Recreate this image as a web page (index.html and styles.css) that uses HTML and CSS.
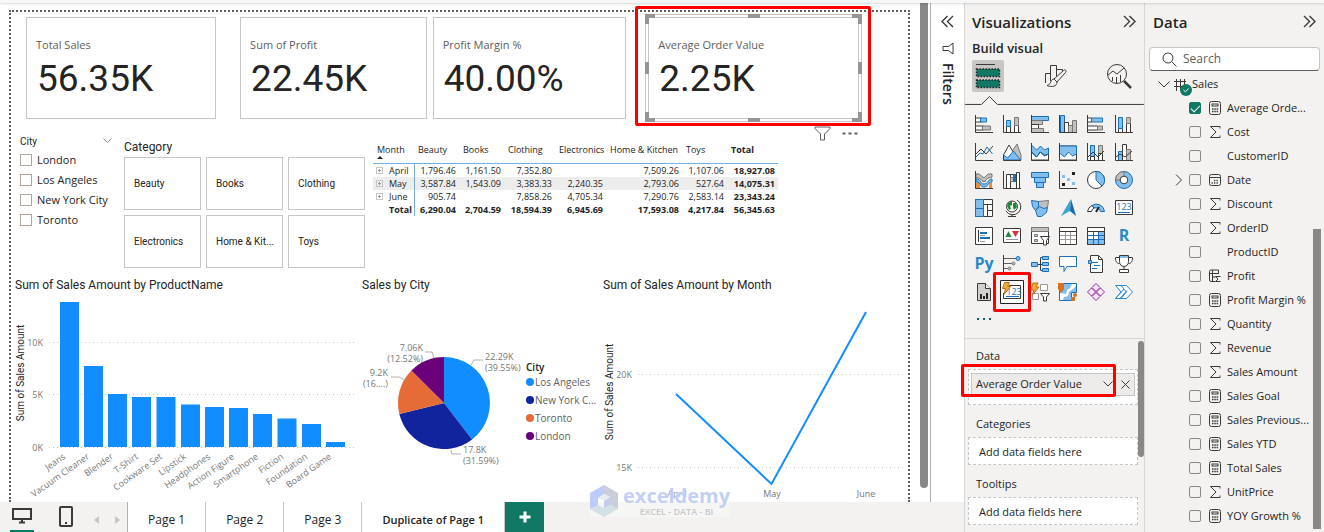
FILE: index.html
```html
<!DOCTYPE html>
<html lang="en">
<head>
    <meta charset="UTF-8">
    <meta name="viewport" content="width=device-width, initial-scale=1.0">
    <title>Sales Report</title>
    <link rel="stylesheet" href="styles.css">
</head>
<body>
    <!-- shared icons -->
    <svg class="defs" aria-hidden="true">
        <symbol id="calc" viewBox="0 0 12 14">
            <rect x="0.5" y="0.5" width="11" height="13" rx="2"/>
            <rect x="3" y="3" width="6" height="2"/>
            <path d="M3 8h1.5M5.3 8h1.5M7.6 8h1.5M3 10.5h1.5M5.3 10.5h1.5M7.6 10.5h1.5" stroke-width="1.5"/>
        </symbol>
        <symbol id="sigma" viewBox="0 0 12 14">
            <path d="M11 3.5V1.5H1.5L7 7l-5.500 5.500H11v-2"/>
        </symbol>
        <symbol id="calendar" viewBox="0 0 12 14">
            <rect x="0.5" y="1.500" width="11" height="11" rx="2"/>
            <path d="M0.500 4.500h11"/>
            <path d="M5 7.500h1.300M7.500 7.500h1.300M2.500 10h1.300M5 10h1.300M7.500 10h1.300" stroke-width="1.300"/>
        </symbol>
        <symbol id="calc-column" viewBox="0 0 12 14">
            <path d="M6 12.500H2a1.500 1.500 0 0 1-1.500-1.500V2.500A1.500 1.500 0 0 1 2 1h7.500v4M3.500 1v11.500M0.500 4.500h9M3.500 8h3"/>
            <path d="M11.500 7.500H6.500L9 10l-2.500 2.500h5"/>
        </symbol>
        <symbol id="collapse" viewBox="0 0 13 13">
            <path d="M1 1l5.500 5.500L1 12M6.500 1L12 6.500 6.500 12" stroke-width="1.400"/>
        </symbol>
    </svg>

    <div class="ribbon-edge"></div>
    <div class="app">
        <div class="workspace">
            <div class="report-row">
                <main class="canvas">
                    <div class="page">
                        <section class="cards">
                            <div class="card card-sales">
                                <div class="card-label">Total Sales</div>
                                <div class="card-value">56.35K</div>
                            </div>
                            <div class="card card-profit">
                                <div class="card-label">Sum of Profit</div>
                                <div class="card-value">22.45K</div>
                            </div>
                            <div class="card card-margin">
                                <div class="card-label">Profit Margin %</div>
                                <div class="card-value">40.00%</div>
                            </div>
                            <div class="card card-order selected">
                                <div class="card-label">Average Order Value</div>
                                <div class="card-value">2.25K</div>
                                <div class="frame">
                                    <span class="handle corner top left"></span>
                                    <span class="handle edge-h top"></span>
                                    <span class="handle corner top right"></span>
                                    <span class="handle edge-v left"></span>
                                    <span class="handle edge-v right"></span>
                                    <span class="handle corner bottom left"></span>
                                    <span class="handle edge-h bottom"></span>
                                    <span class="handle corner bottom right"></span>
                                </div>
                                <div class="mark mark-card"></div>
                            </div>
                        </section>

                        <section class="middle">
                            <div class="slicer">
                                <div class="slicer-head">
                                    <span>City</span>
                                    <svg width="9" height="6" viewBox="0 0 9 6"><path d="M0.500 0.500l4 4 4-4"/></svg>
                                </div>
                                <label><input type="checkbox">London</label>
                                <label><input type="checkbox">Los Angeles</label>
                                <label><input type="checkbox">New York City</label>
                                <label><input type="checkbox">Toronto</label>
                            </div>
                            <div class="category">
                                <h2>Category</h2>
                                <div class="tiles">
                                    <button>Beauty</button>
                                    <button>Books</button>
                                    <button>Clothing</button>
                                    <button>Electronics</button>
                                    <button>Home &amp; Kit...</button>
                                    <button>Toys</button>
                                </div>
                            </div>
                            <table class="matrix">
                                <thead>
                                    <tr>
                                        <th class="month">Month<svg width="6" height="3" viewBox="0 0 6 3"><path d="M0 3l3-3 3 3z"/></svg></th>
                                        <th>Beauty</th><th>Books</th><th class="wide">Clothing</th><th class="wide">Electronics</th><th class="widest">Home &amp; Kitchen</th><th>Toys</th><th class="wide total">Total</th>
                                    </tr>
                                </thead>
                                <tbody>
                                    <tr><th><i></i>April</th><td>1,796.46</td><td>1,161.50</td><td>7,352.80</td><td></td><td>7,509.26</td><td>1,107.06</td><td class="total">18,927.08</td></tr>
                                    <tr class="striped"><th><i></i>May</th><td>3,587.84</td><td>1,543.09</td><td>3,383.33</td><td>2,240.35</td><td>2,793.06</td><td>527.64</td><td class="total">14,075.31</td></tr>
                                    <tr><th><i></i>June</th><td>905.74</td><td></td><td>7,858.26</td><td>4,705.34</td><td>7,290.76</td><td>2,583.14</td><td class="total">23,343.24</td></tr>
                                    <tr class="sum"><th>Total</th><td>6,290.04</td><td>2,704.59</td><td>18,594.39</td><td>6,945.69</td><td>17,593.08</td><td>4,217.84</td><td>56,345.63</td></tr>
                                </tbody>
                            </table>
                            <div class="visual-tools">
                                <button aria-label="Filters on this visual"><svg width="17" height="15" viewBox="0 0 17 15"><path d="M1 1h15v1.500L10.500 8v6h-4V8L1 2.500z"/></svg></button>
                                <button aria-label="More options"><svg width="16" height="15" viewBox="0 0 16 15"><path class="dots" d="M0.500 7.500h3M6.500 7.500h3M12.500 7.500h3"/></svg></button>
                            </div>
                        </section>

                        <section class="charts">
                            <div class="chart">
                                <h2>Sum of Sales Amount by ProductName</h2>
                                <svg viewBox="15 293 347 207">
                                    <path class="gridline" d="M49 342.500h306M49 394.500h306M49 447.500h306"/>
                                    <g class="bars">
                                        <rect x="60" y="302" width="19" height="145"/>
                                        <rect x="84" y="366" width="19" height="81"/>
                                        <rect x="108" y="394" width="19" height="53"/>
                                        <rect x="132" y="397" width="19" height="50"/>
                                        <rect x="156.500" y="397" width="19" height="50"/>
                                        <rect x="181" y="404.500" width="19" height="42.500"/>
                                        <rect x="205" y="407" width="19" height="40"/>
                                        <rect x="229" y="408" width="19" height="39"/>
                                        <rect x="253" y="414" width="19" height="33"/>
                                        <rect x="277.500" y="418.500" width="19" height="28.500"/>
                                        <rect x="302" y="424" width="19" height="23"/>
                                        <rect x="326" y="442" width="19" height="5"/>
                                    </g>
                                    <g class="axis end">
                                        <text x="43" y="346">10K</text>
                                        <text x="43" y="398">5K</text>
                                        <text x="43" y="451">0K</text>
                                        <text transform="translate(66 458) rotate(-35)">Jeans</text>
                                        <text transform="translate(90 458) rotate(-35)">Vacuum Cleaner</text>
                                        <text transform="translate(114 458) rotate(-35)">Blender</text>
                                        <text transform="translate(139 458) rotate(-35)">T-Shirt</text>
                                        <text transform="translate(163 458) rotate(-35)">Cookware Set</text>
                                        <text transform="translate(187 458) rotate(-35)">Lipstick</text>
                                        <text transform="translate(211 458) rotate(-35)">Headphones</text>
                                        <text transform="translate(235 458) rotate(-35)">Action Figure</text>
                                        <text transform="translate(259 458) rotate(-35)">Smartphone</text>
                                        <text transform="translate(284 458) rotate(-35)">Fiction</text>
                                        <text transform="translate(308 458) rotate(-35)">Foundation</text>
                                        <text transform="translate(332 458) rotate(-35)">Board Game</text>
                                    </g>
                                    <text class="axis-title" transform="translate(24 373) rotate(-90)">Sum of Sales Amount</text>
                                </svg>
                            </div>
                            <div class="chart">
                                <h2>Sales by City</h2>
                                <div class="pie-row">
                                    <svg viewBox="362 293 164 207">
                                        <g class="slices">
                                            <path fill="#118dff" d="M444 403V357A46 46 0 0 1 472.100 439.400z"/>
                                            <path fill="#12239e" d="M444 403L472.100 439.400A46 46 0 0 1 399.300 414z"/>
                                            <path fill="#e66c37" d="M444 403L399.300 414A46 46 0 0 1 411.400 370.500z"/>
                                            <path fill="#6b007b" d="M444 403L411.400 370.500A46 46 0 0 1 444 357z"/>
                                        </g>
                                        <path class="leader" d="M471 365l3-5h9M425 352h7l2 6M391 377h8l6 3M451 450l1 4h9"/>
                                        <g class="axis">
                                            <text x="485" y="360">22.29K</text>
                                            <text x="485" y="371">(39.55%)</text>
                                            <text x="463" y="453">17.8K</text>
                                            <text x="463" y="464">(31.59%)</text>
                                        </g>
                                        <g class="axis end">
                                            <text x="423" y="351">7.06K</text>
                                            <text x="423" y="362">(12.52%)</text>
                                            <text x="388" y="376">9.2K</text>
                                            <text x="388" y="387">(16....)</text>
                                        </g>
                                    </svg>
                                    <ul class="legend">
                                        <li class="legend-title">City</li>
                                        <li><i class="la"></i>Los Angeles</li>
                                        <li><i class="ny"></i>New York C...</li>
                                        <li><i class="to"></i>Toronto</li>
                                        <li><i class="lo"></i>London</li>
                                    </ul>
                                </div>
                            </div>
                            <div class="chart">
                                <h2>Sum of Sales Amount by Month</h2>
                                <svg viewBox="603 293 305 207">
                                    <path class="gridline" d="M638 374.500h265M638 467.500h265"/>
                                    <path class="line" d="M676 394l95.500 90L866 312"/>
                                    <g class="axis end">
                                        <text x="632" y="378">20K</text>
                                        <text x="632" y="471">15K</text>
                                    </g>
                                    <g class="axis mid">
                                        <text x="677" y="497">April</text>
                                        <text x="772" y="497">May</text>
                                        <text x="866" y="497">June</text>
                                    </g>
                                    <text class="axis-title" transform="translate(613 392) rotate(-90)">Sum of Sales Amount</text>
                                </svg>
                            </div>
                        </section>
                    </div>
                    <div class="canvas-scroll"></div>
                </main>

                <aside class="filters">
                    <button aria-label="Expand filters"><svg class="flip" width="13" height="13"><use href="#collapse"/></svg></button>
                    <svg class="funnel" width="12" height="13" viewBox="0 0 12 13"><path d="M11 1v11L6.500 8.500H1v-4h5.500z"/></svg>
                    <span>Filters</span>
                </aside>
            </div>

            <nav class="tabs">
                <div class="views">
                    <button class="view active" aria-label="Desktop layout"><svg width="20" height="16" viewBox="0 0 20 16"><path d="M1 1h18v10H1zM10 11v3M7 14.500h6"/></svg></button>
                    <button class="view" aria-label="Mobile layout"><svg width="14" height="21" viewBox="0 0 14 21"><rect x="1" y="1" width="12" height="19" rx="1"/><path d="M6 17h2"/></svg></button>
                    <div class="steps">
                        <button aria-label="Previous page"><svg width="5" height="8" viewBox="0 0 5 8"><path d="M5 0v8L0 4z"/></svg></button>
                        <button aria-label="Next page"><svg width="5" height="8" viewBox="0 0 5 8"><path d="M0 0v8l5-4z"/></svg></button>
                    </div>
                </div>
                <button class="tab">Page 1</button>
                <button class="tab">Page 2</button>
                <button class="tab">Page 3</button>
                <button class="tab current">Duplicate of Page 1</button>
                <button class="add" aria-label="New page"><svg width="12" height="12" viewBox="0 0 12 12"><path d="M6 0.500v11M0.500 6h11"/></svg></button>
                <div class="watermark">
                    <svg width="28" height="32" viewBox="0 0 28 32">
                        <path fill="#bccbf8" d="M14 0v9l-6 4v8L0 24V8z"/>
                        <path fill="#c9ced8" d="M14 0l14 8v16l-8-4v-8l-6-3z"/>
                        <path fill="#d3e0e6" d="M0 24l8-4 6 3 6-3 8 4-14 8z"/>
                        <path fill="#e8ebf2" d="M8 13l6-4 6 3-6 4z"/>
                        <path fill="#c2cdf0" d="M14 16l6-4v8l-6 3z"/>
                    </svg>
                    <div>
                        <strong>exceldemy</strong>
                        <small>EXCEL - DATA - BI</small>
                    </div>
                </div>
            </nav>
        </div>

        <aside class="viz">
            <header>
                <h1>Visualizations</h1>
                <button aria-label="Collapse"><svg width="13" height="13"><use href="#collapse"/></svg></button>
            </header>
            <h3>Build visual</h3>
            <div class="modes">
                <button class="mode on" aria-label="Build visual">
                    <svg width="32" height="32" viewBox="0 0 32 32">
                        <path class="k" d="M4 4.500h19"/>
                        <path d="M4.500 9h23v7.500h-23zM4.500 20h23v7.500h-23z" fill="#117865" stroke="#222" stroke-width="1.500" stroke-dasharray="1.500 1.500"/>
                    </svg>
                </button>
                <button class="mode" aria-label="Format visual">
                    <svg width="24" height="24" viewBox="0 0 24 24">
                        <path class="k" d="M2.500 19V9.500h5M7.500 17V1.500h6v11M13.500 5.500h6v2"/>
                        <path class="k" d="M11 15L20.500 6.500c1.500-1.500 3.500 0 2 2L14 18M11 15c-4 0-2 5-7 6.500 5 2 10 1 10-3.500zM11 15l3 3"/>
                    </svg>
                </button>
                <button class="mode" aria-label="Analytics">
                    <svg width="26" height="26" viewBox="0 0 26 26">
                        <circle class="k" cx="11" cy="11" r="9.500"/>
                        <path class="k" d="M2 12l5-4 4 3 7-6M6.500 18v-4M10.500 20v-6M14.500 19v-7"/>
                        <path d="M18 18l7 7" stroke="#3b3a39" stroke-width="2.500"/>
                    </svg>
                </button>
            </div>
            <svg class="notch" viewBox="0 0 180 9"><path class="k" d="M0 8.500h16.500l8-8 8 8H180"/></svg>

            <div class="gallery">
                <button aria-label="Stacked bar"><svg viewBox="0 0 18 18"><path class="w" d="M0.500 3h6v4h-6zM0.500 11h8v4h-8z"/><path class="b" d="M5.500 3h6v4h-6z"/><path class="g" d="M7.500 11h8v4h-8z"/><path class="k" d="M0.500 0v17.500H18"/></svg></button>
                <button aria-label="Stacked column"><svg viewBox="0 0 18 18"><path class="w" d="M3.500 11.500h4v6h-4zM11.500 10.500h4v7h-4z"/><path class="b" d="M3.500 5.500h4v6h-4z"/><path class="g" d="M11.500 2.500h4v8h-4z"/><path class="k" d="M0.500 0v17.500H18"/></svg></button>
                <button aria-label="Clustered bar"><svg viewBox="0 0 18 18"><path class="b" d="M0.500 1.500h17v4h-17z"/><path class="g" d="M0.500 5.500h11v4h-11z"/><path class="w" d="M0.500 9.500h7v4h-7z"/><path class="g" d="M0.500 13.500h12v4h-12z"/><path class="k" d="M0.500 0v17.500H18"/></svg></button>
                <button aria-label="Clustered column"><svg viewBox="0 0 18 18"><path class="b" d="M1.500 0.500h4v17h-4z"/><path class="w" d="M5.500 7.500h4v10h-4z"/><path class="g" d="M9.500 10.500h4v7h-4zM13.500 5.500h4v12h-4z"/><path class="k" d="M0.500 0v17.500H18"/></svg></button>
                <button aria-label="Full stacked bar"><svg viewBox="0 0 18 18"><path class="w" d="M0.500 3h4v4h-4zM0.500 11h10v4h-10z"/><path class="b" d="M4.500 3h11v4h-11z"/><path class="g" d="M10.500 11h5v4h-5z"/><path class="k" d="M0.500 0v17.500H18"/></svg></button>
                <button aria-label="Full stacked column"><svg viewBox="0 0 18 18"><path class="w" d="M3.500 13.500h4v4h-4zM11.500 8.500h4v9h-4z"/><path class="b" d="M3.500 2.500h4v11h-4z"/><path class="g" d="M11.500 2.500h4v6h-4z"/><path class="k" d="M0.500 0v17.500H18"/></svg></button>

                <button aria-label="Line"><svg viewBox="0 0 18 18"><path class="l" d="M1 14l4-4 3 1 4-7 5.500 7"/><path class="k" d="M1 11l5-5 5 5 7-8M0.500 0v17.500H18"/></svg></button>
                <button aria-label="Area"><svg viewBox="0 0 18 18"><path class="g" d="M8 10l6-9 4 11v5H10z"/><path class="w" d="M0.500 12L6 2l6 10-5 5H0.500z"/><path class="b" d="M0.500 17v-5l4 3 6-7 7 9z"/><path class="k" d="M0.500 12v5.500H18"/></svg></button>
                <button aria-label="Stacked area"><svg viewBox="0 0 18 18"><path class="b" d="M0.500 2l5 5 4-4 4 4 4-2v6l-4 1-4-3-4 5-5-5z"/><path class="w" d="M0.500 9l5 5 4-5 4 4 4-2v6h-17z"/><path class="l" d="M0.500 9l5 5 4-5 4 4 4-2"/><path class="k" d="M0.500 0v17.500H18"/></svg></button>
                <button aria-label="Full stacked area"><svg viewBox="0 0 18 18"><path class="w" d="M0.500 3h17v14h-17z"/><path class="b" d="M0.500 3h17v8l-4 2-4-4-4 5-5-4z"/><path class="k" d="M0.500 0v17.500H18"/></svg></button>
                <button aria-label="Line and stacked column"><svg viewBox="0 0 18 18"><path class="b" d="M3.500 2.500h4v11h-4z"/><path class="g" d="M11.500 2.500h4v8h-4z"/><path class="w" d="M3.500 13.500h4v4h-4zM11.500 10.500h4v7h-4z"/><path class="k" d="M1 14l5-5 5 5 6-6M0.500 0v17.500H18"/></svg></button>
                <button aria-label="Line and clustered column"><svg viewBox="0 0 18 18"><path class="b" d="M3.500 8.500h4v9h-4z"/><path class="w" d="M7.500 1.500h4v16h-4z"/><path class="g" d="M11.500 6.500h4v11h-4z"/><path class="k" d="M1 14l4-3 5 3 7-6M0.500 0v17.500H18"/></svg></button>

                <button aria-label="Ribbon"><svg viewBox="0 0 18 18"><path fill="#e8912d" stroke="none" d="M1 12h4v5H1zM14 12h3v5h-3zM7 8h4v3H7z"/><path class="g" d="M1 3h3l5 4 4-4h4v3l-4 1-4 4-5-4H1z"/><path class="b" d="M1 8c6 0 3 5 8 5s3-5 8-5v3c-5 0-3 5-8 5s-2-5-8-5z"/><path class="k" d="M0.500 0v17.500H18"/></svg></button>
                <button aria-label="Waterfall"><svg viewBox="0 0 18 18"><path class="w" d="M3.500 3.500h4v14h-4zM7.500 3.500h3v5h-3zM13.500 1.500h3v16h-3z"/><path class="g" d="M7.500 6.500h3v4h-3z"/><path fill="#1a6fba" stroke="none" d="M10 3h3v8h-3z"/><path class="k" d="M0.500 0v17.500H18"/></svg></button>
                <button aria-label="Funnel"><svg viewBox="0 0 18 18"><path class="b" d="M0.500 1.500h17v5h-17zM3.500 6.500h11v5h-11zM5.500 11.500h7v5h-7z"/></svg></button>
                <button aria-label="Scatter"><svg viewBox="0 0 18 18"><path fill="#83beec" stroke="none" d="M3 4h3v3H3zM8 7h3v3H8zM13 11h3v3h-3z"/><path fill="#222" stroke="none" d="M13 1h3v3h-3zM3 12h3v3H3z"/><path class="k" d="M0.500 0v17.500H18"/></svg></button>
                <button aria-label="Pie"><svg viewBox="0 0 18 18"><circle class="w" cx="9" cy="9" r="8.500"/><path class="b" d="M9 9V0.500a8.500 8.500 0 0 1 6 14.500z"/></svg></button>
                <button aria-label="Donut"><svg viewBox="0 0 18 18"><circle class="b" cx="9" cy="9" r="8.500"/><path class="g" d="M0.500 9A8.500 8.500 0 0 1 9 0.500V9z"/><circle class="w" cx="9" cy="9" r="3.800"/></svg></button>

                <button aria-label="Treemap"><svg viewBox="0 0 18 18"><path class="w" d="M0.500 0.500h17v17h-17z"/><path class="b" d="M0.500 0.500h8v17h-8z"/><path class="k" d="M8.500 5.500h9M12.500 5.500v6h5M12.500 11.500v6"/><path class="l" d="M0.500 9.500h8"/></svg></button>
                <button aria-label="Map"><svg viewBox="0 0 18 18"><circle class="w" cx="9" cy="7.500" r="5.500"/><path fill="#1f8a3b" stroke="none" d="M4 7l1-3 4-2v4l-2 1 1 3-2 1zM10 4l3 0 1 4-3 3-1-3z"/><path class="k" d="M14 1a8 8 0 1 1-11 11M9 15v2.500M5 17.500h8"/></svg></button>
                <button aria-label="Filled map"><svg viewBox="0 0 18 18"><path class="g" d="M7.500 2.500l10-1-1 7-4 2-5-2z"/><path class="b" d="M0.500 1.500l7 1v5l-3 4-3-4z"/><path class="b" d="M4.500 11.500l4-4 4 2 4-1-1 5-5 4h-4z"/></svg></button>
                <button aria-label="Azure map"><svg viewBox="0 0 18 18"><path fill="#35a6d6" stroke="none" d="M12 0L2 17l9-5z"/><path fill="#1668b0" stroke="none" d="M12 0l5 17-6-5z"/></svg></button>
                <button aria-label="Gauge"><svg viewBox="0 0 18 18"><path class="b" d="M5 6.500a8 8 0 0 1 12.500 6h-4A5 5 0 0 0 7 9z"/><path class="w" d="M0.500 12.500a8 8 0 0 1 4.500-6L7 9a5 5 0 0 0-2.500 3.500z"/><path d="M9 13l3-5" stroke="#222" stroke-width="2"/></svg></button>
                <button aria-label="Card"><svg viewBox="0 0 18 18"><path class="w" d="M0.500 1.500h17v14h-17z"/><text x="9" y="11" class="num">123</text><path class="l" d="M3 13.500h12"/></svg></button>

                <button aria-label="Multi-row card"><svg viewBox="0 0 18 18"><path class="w" d="M0.500 0.500h17v17h-17z"/><path class="k" d="M3.500 3v12"/><path d="M5 6h7M5 11h10" stroke="#1a6fba" stroke-width="2"/><path d="M5 8.500h5M5 14.500h5" stroke="#999"/></svg></button>
                <button aria-label="KPI"><svg viewBox="0 0 18 18"><path class="w" d="M0.500 1.500h17v14h-17z"/><path fill="#1f8a3b" stroke="none" d="M2.500 10L5.500 4l3 6z"/><path fill="#d13438" stroke="none" d="M9 4h7l-3.500 6z"/><path d="M3 12.500h12" stroke="#999"/></svg></button>
                <button aria-label="Slicer"><svg viewBox="0 0 18 18"><path class="w" d="M0.500 0.500h17v16h-17z"/><path class="g" d="M0.500 0.500h17v4h-17zM3.500 7.500h3v2h-3zM3.500 12.500h3v2h-3z"/><path class="w" d="M9.500 9.500h9l-3 4v4.500h-3v-4.500z"/></svg></button>
                <button aria-label="Table"><svg viewBox="0 0 18 18"><path class="w" d="M0.500 0.500h17v17h-17z"/><path d="M1 8.500h16M1 12.500h16M6.500 5v12M11.500 5v12" stroke="#999"/><path class="k" d="M0.500 4.500h17"/></svg></button>
                <button aria-label="Matrix"><svg viewBox="0 0 18 18"><path class="w" d="M0.500 0.500h17v17h-17z"/><path fill="#83beec" stroke="none" d="M12 4h5v13H1v-4h11z"/><path d="M1 8.500h16M1 12.500h16M6.500 5v12M11.500 5v12" stroke="#1a6fba"/><path class="k" d="M0.500 0.500h17v17h-17zM0.500 4.500h17"/></svg></button>
                <button aria-label="R visual"><svg viewBox="0 0 18 18"><text x="9" y="14" class="letter">R</text></svg></button>

                <button aria-label="Python visual"><svg viewBox="0 0 18 18"><text x="9" y="14" class="letter">Py</text></svg></button>
                <button aria-label="Key influencers"><svg viewBox="0 0 18 18"><path d="M1 3.500h13M1 8.500h8M1 13.500h5" stroke="#605e5c"/><circle class="b" cx="15" cy="3.500" r="2"/><circle class="g" cx="10.500" cy="8.500" r="1.500"/><circle class="g" cx="6.500" cy="13.500" r="1.500"/><path class="k" d="M0.500 0v18"/></svg></button>
                <button aria-label="Decomposition tree"><svg viewBox="0 0 18 18"><path class="k" d="M6 9.500h6M9.500 3v12M9.500 2.500h2M9.500 15.500h2"/><path class="b" d="M0.500 7.500h6v4h-6zM11.500 1.500h6v3h-6zM11.500 7.500h6v3h-6zM11.500 13.500h6v3h-6z"/></svg></button>
                <button aria-label="Q and A"><svg viewBox="0 0 18 18"><path d="M0.500 1.500h17v10H8l-3 5v-5H0.500z" fill="#fff" stroke="#1a6fba"/></svg></button>
                <button aria-label="Narrative"><svg viewBox="0 0 18 18"><path class="w" d="M3.500 0.500h8l4 4v13h-12z"/><path class="k" d="M11.500 0.500v4h4"/><path class="l" d="M5 7.500h6M7 10.500h6M5 13.500h5"/><path class="b" d="M1.500 5.500h3v3h-3z"/></svg></button>
                <button aria-label="Goals"><svg viewBox="0 0 18 18"><path class="w" d="M4.500 2.500h-4c0 5 2 6 4 6M13.500 2.500h4c0 5-2 6-4 6M4.500 0.500h9v6c0 3-2 5-4.500 5s-4.500-2-4.500-5z"/><path class="k" d="M9 11.500v3"/><path fill="#83beec" stroke="none" d="M5 1h8v2H5z"/><path class="w" d="M4.500 14.500h9v3h-9z"/></svg></button>

                <button aria-label="Paginated report"><svg viewBox="0 0 18 18"><path fill="#d2d0ce" stroke="#3b3a39" d="M2.500 0.500h8l5 5v12h-13z"/><path class="w" d="M10.500 0.500v5h5"/><path fill="#222" stroke="none" d="M5 11h2v5H5zM8 13h2v3H8zM11 10h2v6h-2z"/></svg></button>
                <button class="picked" aria-label="Card (new)"><svg viewBox="0 0 24 24"><path d="M0.500 0.500h23v23H0.500z" fill="#fff" stroke="#222"/><path class="k" d="M9 5.500h11.500v13h-17V13"/><text x="14" y="15" class="num">123</text><path class="l" d="M6 16.500h13"/><path fill="#f2a93b" stroke="#c4700f" d="M4.500 2.500h5l-2 4h3l-6.500 8 1.500-6H2.500z"/></svg><span class="mark mark-icon"></span></button>
                <button aria-label="Slicer (new)"><svg viewBox="0 0 18 18"><path d="M9.500 1.500h7v6h-7zM1.500 10.500h6v6h-6z" fill="#fff" stroke="#999"/><path class="w" d="M9.500 10.500h9l-3 3.500v4h-3v-4z"/><path fill="#f2a93b" stroke="#c4700f" d="M2 0h5L5 4h3l-6.500 8L3 7H0z"/></svg></button>
                <button aria-label="ArcGIS map"><svg viewBox="0 0 18 18"><path class="b" d="M0.500 0.500h17v9h-5v8h-12z"/><path fill="#fff" stroke="none" d="M1 10v7h3l1-3 4-1 1-4 4-3 3-3V1h-4l-2 4-3 2-1 4z"/><path fill="#d9701c" stroke="none" d="M-1 0h6v6l-3 4-3-4zM12 14h4v4h-4z"/><circle cx="16" cy="12" r="2" fill="#d9701c" stroke="none"/></svg></button>
                <button aria-label="Power Apps"><svg viewBox="0 0 18 18"><path d="M9 0.500l4 4-4 4-4-4zM9 9.500l4 4-4 4-4-4zM4.500 5l4 4-4 4-4-4zM13.500 5l4 4-4 4-4-4z" fill="#f8e8f8" stroke="#93329e"/></svg></button>
                <button aria-label="Power Automate"><svg viewBox="0 0 18 18"><path d="M0.500 2.500h11l6 6.500-6 6.500h-11L6 9z" fill="#fff" stroke="#2b88d8"/><path d="M6 2.500L11.500 9 6 15.500M0.500 15.500L9 6M5 15.500l7-8" fill="none" stroke="#2b88d8"/></svg></button>
            </div>
            <button class="more-visuals" aria-label="Get more visuals"><svg width="16" height="4" viewBox="0 0 16 4"><path d="M1 1h2v2H1zM7 1h2v2H7zM13 1h2v2h-2z"/></svg></button>

            <div class="wells">
                <div class="wells-list">
                    <h4 class="first">Data</h4>
                    <div class="well filled">
                        <div class="pill">
                            <span>Average Order Value</span>
                            <button aria-label="Field options"><svg width="10" height="6" viewBox="0 0 10 6"><path d="M0.500 0.500L5 5l4.500-4.500"/></svg></button>
                            <button class="remove" aria-label="Remove field"><svg width="9" height="9" viewBox="0 0 9 9"><path d="M0.500 0.500l8 8M8.500 0.500l-8 8"/></svg></button>
                        </div>
                        <div class="mark mark-well"></div>
                    </div>
                    <h4>Categories</h4>
                    <div class="well">Add data fields here</div>
                    <h4>Tooltips</h4>
                    <div class="well">Add data fields here</div>
                </div>
                <div class="wells-scroll"></div>
            </div>
        </aside>

        <aside class="data">
            <header>
                <h1>Data</h1>
                <button aria-label="Collapse"><svg width="13" height="13"><use href="#collapse"/></svg></button>
            </header>
            <label class="search">
                <svg width="15" height="15" viewBox="0 0 15 15"><circle cx="6" cy="6" r="5"/><path d="M9.500 9.500l5 5"/></svg>
                <input type="text" placeholder="Search" aria-label="Search">
            </label>
            <div class="tree">
                <div class="fields">
                    <div class="table-row">
                        <svg width="12" height="7" viewBox="0 0 12 7"><path d="M0.500 0.500L6 6l5.500-5.500"/></svg>
                        <svg class="table-icon" width="19" height="18" viewBox="0 0 19 18">
                            <path d="M0 3.500h12M0 8.500h12M2.500 1v12M6.500 1v12M10.500 1v11"/>
                            <circle cx="12" cy="12" r="6"/>
                            <path class="tick" d="M9.500 12l2 1.800 3-3.300"/>
                        </svg>
                        <span>Sales</span>
                    </div>
                    <label class="field"><input type="checkbox" checked><svg><use href="#calc"/></svg>Average Orde...</label>
                    <label class="field"><input type="checkbox"><svg><use href="#sigma"/></svg>Cost</label>
                    <label class="field"><input type="checkbox"><svg></svg>CustomerID</label>
                    <label class="field expandable"><svg class="chevron" viewBox="0 0 12 14"><path d="M3 1.500L8.500 7 3 12.500"/></svg><input type="checkbox"><svg><use href="#calendar"/></svg>Date</label>
                    <label class="field"><input type="checkbox"><svg><use href="#sigma"/></svg>Discount</label>
                    <label class="field"><input type="checkbox"><svg><use href="#sigma"/></svg>OrderID</label>
                    <label class="field"><input type="checkbox"><svg></svg>ProductID</label>
                    <label class="field"><input type="checkbox"><svg><use href="#calc-column"/></svg>Profit</label>
                    <label class="field"><input type="checkbox"><svg><use href="#calc"/></svg>Profit Margin %</label>
                    <label class="field"><input type="checkbox"><svg><use href="#sigma"/></svg>Quantity</label>
                    <label class="field"><input type="checkbox"><svg><use href="#sigma"/></svg>Revenue</label>
                    <label class="field"><input type="checkbox"><svg><use href="#sigma"/></svg>Sales Amount</label>
                    <label class="field"><input type="checkbox"><svg><use href="#calc"/></svg>Sales Goal</label>
                    <label class="field"><input type="checkbox"><svg><use href="#calc"/></svg>Sales Previous...</label>
                    <label class="field"><input type="checkbox"><svg><use href="#calc"/></svg>Sales YTD</label>
                    <label class="field"><input type="checkbox"><svg><use href="#calc"/></svg>Total Sales</label>
                    <label class="field"><input type="checkbox"><svg><use href="#sigma"/></svg>UnitPrice</label>
                    <label class="field"><input type="checkbox"><svg><use href="#calc"/></svg>YOY Growth %</label>
                </div>
                <div class="tree-scroll"></div>
            </div>
        </aside>
    </div>
</body>
</html>
```

FILE: styles.css
```css
* {
    box-sizing: border-box;
}

body {
    margin: 0;
    height: 100vh;
    display: flex;
    flex-direction: column;
    overflow: hidden;
    font-family: "Open Sans", "Noto Sans", sans-serif;
    font-size: 11px;
    line-height: 16px;
    color: #252423;
    background-color: #f3f2f1;
}

h1, h2, h3, h4, ul {
    margin: 0;
    padding: 0;
    font-weight: 600;
}

button {
    margin: 0;
    padding: 0;
    border: 0;
    background: none;
    font: inherit;
    color: inherit;
    cursor: pointer;
}

svg {
    display: block;
    fill: none;
    stroke: #3b3a39;
}

svg text {
    stroke: none;
}

.defs {
    position: absolute;
    width: 0;
    height: 0;
}

.ribbon-edge {
    flex: none;
    height: 3px;
    background-color: #f7f7f7;
    box-shadow: 0 0 3px rgba(0, 0, 0, 0.3);
    z-index: 1;
}

.app {
    flex: 1;
    display: flex;
    min-height: 0;
}

.workspace {
    flex: 1;
    min-width: 0;
    display: flex;
    flex-direction: column;
}

.report-row {
    flex: 1;
    min-height: 0;
    display: flex;
    background-color: #fff;
}

/* report canvas */
.canvas {
    flex: 1;
    min-width: 0;
    display: flex;
    padding-left: 9px;
    padding-right: 2px;
    border-right: 1px solid #b3b0ad;
}

.page {
    flex: 1;
    min-width: 0;
    margin-top: 7px;
    margin-right: 10px;
    border: 2px dotted #605e5c;
    border-bottom: 0;
}

.canvas-scroll {
    width: 8px;
    margin-bottom: 14px;
    border-radius: 0 0 4px 4px;
    background-color: #8a8886;
}

.cards {
    display: flex;
    padding: 5px 49px 0 15px;
}

.card {
    position: relative;
    height: 102px;
    padding: 19px 9px;
    border: 1px solid #c8c6c4;
}

.card-sales {
    flex: 190;
}

.card-profit {
    flex: 186;
    margin-left: 24px;
}

.card-margin {
    flex: 194;
    margin-left: 6px;
}

.card-order {
    flex: 213;
    margin-left: 22px;
}

.card-label {
    color: #605e5c;
}

.card-value {
    padding-left: 1px;
    font-family: Roboto, sans-serif;
    font-size: 37px;
    line-height: 52px;
}

.frame {
    position: absolute;
    inset: -4px;
    border: 1px solid #c8c6c4;
}

.handle {
    position: absolute;
    border: 0 solid #979593;
}

.corner {
    width: 10px;
    height: 10px;
}

.edge-h {
    left: 50%;
    width: 12px;
    margin-left: -6px;
}

.edge-v {
    top: 50%;
    height: 12px;
    margin-top: -6px;
}

.top { top: -1px; border-top-width: 4px; }
.bottom { bottom: -1px; border-bottom-width: 4px; }
.left { left: -1px; border-left-width: 4px; }
.right { right: -1px; border-right-width: 4px; }

/* red highlight boxes */
.mark {
    position: absolute;
    border: 3px solid #f00;
    border-radius: 2px;
    pointer-events: none;
}

.mark-card {
    inset: -12px -13px -8px -14px;
}

.mark-icon {
    inset: -6px -5px;
}

.mark-well {
    inset: -6px 21px 7px -8px;
}

.middle {
    display: flex;
    align-items: flex-start;
    height: 158px;
    padding-left: 9px;
    padding-right: 50px;
}

.slicer {
    width: 92px;
    padding-top: 15px;
}

.slicer-head {
    display: flex;
    justify-content: space-between;
    font-family: Roboto, sans-serif;
    font-size: 10px;
}

.slicer-head svg {
    stroke: #8a8886;
    margin-top: 4px;
}

.slicer label {
    display: flex;
    align-items: center;
    height: 20px;
    white-space: nowrap;
}

input[type="checkbox"] {
    appearance: none;
    flex: none;
    width: 12px;
    height: 12px;
    margin: 0;
    border: 1px solid #8a8886;
    border-radius: 2px;
}

.slicer input[type="checkbox"] {
    margin-right: 5px;
    border-color: #b5a69c;
    border-radius: 0;
}

.category {
    width: 241px;
    margin-left: 12px;
    padding-top: 20px;
}

h2 {
    font-family: Roboto, sans-serif;
    font-size: 12px;
    font-weight: 400;
}

.tiles {
    display: grid;
    grid-template-columns: repeat(3, 1fr);
    grid-auto-rows: 53px;
    gap: 5px;
    margin-top: 2px;
}

.tiles button {
    padding-left: 9px;
    border: 1px solid #c8c6c4;
    font-family: Roboto, sans-serif;
    font-size: 10px;
    text-align: left;
}

.matrix {
    width: 405px;
    margin-left: 8px;
    margin-top: 24px;
    border-collapse: collapse;
    table-layout: fixed;
    font-size: 9px;
    line-height: 13px;
}

.matrix th, .matrix td {
    height: 13px;
    padding: 0 3px 0 4px;
    text-align: right;
    white-space: nowrap;
    font-weight: 400;
}

.matrix thead th {
    height: 20px;
    vertical-align: top;
    text-align: left;
    border-bottom: 1px solid #71afe2;
}

.matrix .month {
    width: 41px;
}

.matrix .month svg {
    fill: #252423;
    stroke: none;
}

.matrix .wide {
    width: 51px;
}

.matrix .widest {
    width: 76px;
}

.matrix tbody th {
    text-align: left;
    padding-left: 16px;
    padding-right: 0;
    border-right: 1px solid #71afe2;
}

.matrix i {
    float: left;
    width: 7px;
    height: 7px;
    margin-left: -13px;
    margin-top: 3px;
    border: 1px solid #c8c6c4;
    background: linear-gradient(#999, #999) 50% 50% / 3px 1px no-repeat, linear-gradient(#999, #999) 50% 50% / 1px 3px no-repeat;
}

.matrix .striped {
    background-color: #ededed;
}

.matrix td.total, .matrix th.total, .matrix .sum th, .matrix .sum td {
    font-weight: 700;
}

.visual-tools {
    display: flex;
    gap: 11px;
    margin-left: auto;
    padding-top: 7px;
}

.visual-tools svg {
    stroke: #605e5c;
}

.visual-tools .dots {
    stroke-width: 2;
}

.charts {
    display: grid;
    grid-template-columns: 347fr 241fr 305fr;
    padding-left: 4px;
}

.chart > svg {
    width: 100%;
}

.gridline {
    stroke: #c8c6c4;
    stroke-dasharray: 1 3;
}

.bars {
    fill: #118dff;
    stroke: none;
}

.slices {
    stroke: none;
}

.axis {
    fill: #777;
    font-size: 9px;
}

.end {
    text-anchor: end;
}

.mid {
    text-anchor: middle;
}

.axis-title {
    fill: #252423;
    font-family: Roboto, sans-serif;
    font-size: 10px;
    text-anchor: middle;
}

.leader {
    stroke: #b3b0ad;
}

.line {
    stroke: #118dff;
    stroke-width: 2;
}

.pie-row {
    display: flex;
}

.pie-row svg {
    flex: 164;
    min-width: 0;
    overflow: visible;
}

.legend {
    flex: 77;
    min-width: 0;
    padding-top: 68px;
    list-style: none;
    font-size: 10px;
    font-weight: 400;
    line-height: 18px;
    color: #605e5c;
    white-space: nowrap;
}

.legend li {
    display: flex;
    align-items: center;
}

.legend .legend-title {
    height: 12px;
    font-weight: 600;
    color: #252423;
}

.legend i {
    width: 8px;
    height: 8px;
    margin-right: 1px;
    border-radius: 50%;
}

.la { background-color: #118dff; }
.ny { background-color: #12239e; }
.to { background-color: #e66c37; }
.lo { background-color: #6b007b; }

/* filters strip */
.filters {
    flex: none;
    width: 33px;
    display: flex;
    flex-direction: column;
    align-items: center;
    gap: 8px;
    padding-top: 12px;
}

.filters .funnel {
    margin-top: 6px;
}

.filters .flip {
    transform: scaleX(-1);
}

.filters span {
    writing-mode: vertical-rl;
    font-size: 14px;
    font-weight: 600;
}

/* page tabs */
.tabs {
    position: relative;
    flex: none;
    height: 30px;
    display: flex;
}

.views {
    display: flex;
    gap: 20px;
    width: 128px;
    padding-left: 10px;
    border-right: 1px solid #b3b0ad;
}

.view {
    flex: none;
    display: flex;
    justify-content: center;
    align-items: center;
    width: 24px;
    border-bottom: 2px solid transparent;
}

.view svg {
    stroke-width: 2;
}

.active {
    border-color: #117865;
}

.steps {
    display: flex;
    gap: 16px;
    padding-top: 6px;
    margin-left: -4px;
}

.steps svg {
    fill: #c8c6c4;
    stroke: none;
}

.tab {
    padding: 6px 20px 0;
    border-right: 1px solid #c8c6c4;
    background-color: #fff;
    font-size: 12px;
}

.current {
    padding-left: 20px;
    padding-right: 20px;
    font-size: 11px;
    font-weight: 600;
}

.add {
    display: flex;
    justify-content: center;
    align-items: center;
    width: 39px;
    background-color: #117865;
}

.add svg {
    stroke: #fff;
    stroke-width: 3;
}

.watermark {
    position: absolute;
    left: 590px;
    bottom: 15px;
    display: flex;
    gap: 5px;
    background-color: rgba(255, 255, 255, 0.3);
    color: #c3cff5;
}

.watermark svg {
    stroke: none;
}

.watermark strong, .watermark small {
    display: block;
}

.watermark strong {
    font-size: 20px;
    line-height: 22px;
}

.watermark small {
    font-size: 9px;
    line-height: 9px;
    font-weight: 600;
    text-align: center;
    color: #c8c8cc;
}

/* side panes */
.viz, .data {
    flex: none;
    width: 180px;
    padding-top: 6px;
    border-left: 1px solid #d8d6d4;
}

header {
    display: flex;
    justify-content: space-between;
    align-items: center;
    height: 25px;
    padding: 0 8px 0 7px;
}

h1 {
    font-size: 15px;
}

.viz h3 {
    margin: 6px 7px 3px;
}

.modes {
    display: flex;
    justify-content: space-between;
    align-items: center;
    padding: 0 12px 0 7px;
    height: 34px;
}

.mode.on {
    border-radius: 2px;
    background-color: #c8c6c4;
}

.notch {
    width: 100%;
    margin-top: 3px;
}

.k { fill: none; stroke: #3b3a39; }
.w { fill: #fff; stroke: #3b3a39; }
.b { fill: #83beec; stroke: #1a6fba; }
.g { fill: #c0c0c0; stroke: #797775; }
.l { fill: none; stroke: #1a6fba; }

.num {
    fill: #1a6fba;
    font-size: 9px;
    text-anchor: middle;
}

.letter {
    fill: #2b88c8;
    font-size: 16px;
    font-weight: 700;
    text-anchor: middle;
}

.gallery {
    display: grid;
    grid-template-columns: repeat(6, 28px);
    grid-auto-rows: 28px;
    margin-top: 5px;
    padding-left: 5px;
}

.gallery button {
    position: relative;
    display: flex;
    justify-content: center;
    align-items: center;
}

.gallery svg {
    flex: none;
    width: 18px;
    height: 18px;
    overflow: visible;
}

.gallery .picked svg {
    width: 24px;
    height: 24px;
}

.more-visuals {
    display: block;
    padding: 11px 0 10px 11px;
}

.more-visuals svg {
    fill: #1a4f8a;
    stroke: none;
}

.wells {
    display: flex;
    margin-top: 7px;
    border-top: 1px solid #d8d6d4;
    padding-top: 2px;
}

.wells-list {
    flex: 1;
    padding-left: 3px;
}

.wells-scroll {
    width: 6px;
    height: 116px;
    border-radius: 3px;
    background-color: #8a8886;
}

h4 {
    padding: 11px 8px 5px;
    font-weight: 400;
}

h4.first {
    padding-top: 7px;
}

.well {
    position: relative;
    height: 28px;
    padding-left: 10px;
    border: 1px dashed #c8c6c4;
    background-color: #fff;
    line-height: 28px;
}

.well.filled {
    height: 36px;
    padding: 3px 2px;
}

.pill {
    display: flex;
    align-items: center;
    height: 23px;
    padding-left: 4px;
    border: 1px solid #c8c6c4;
    background-color: #edebe9;
    white-space: nowrap;
}

.pill span {
    flex: 1;
}

.pill .remove {
    display: flex;
    justify-content: center;
    align-items: center;
    align-self: stretch;
    width: 19px;
    margin-left: 2px;
    border-left: 1px solid #c8c6c4;
}

/* data pane */
.data header {
    padding-left: 8px;
}

.search {
    display: flex;
    align-items: center;
    height: 24px;
    margin: 13px 4px 0;
    padding-left: 12px;
    border: 1px solid #c8c6c4;
    border-bottom-color: #605e5c;
    border-radius: 4px;
    background-color: #fff;
}

.search input {
    flex: 1;
    min-width: 0;
    padding: 0 0 0 6px;
    border: 0;
    outline: 0;
    background: none;
    font: inherit;
    font-size: 12px;
}

.search input::placeholder {
    color: #605e5c;
}

.tree {
    display: flex;
    padding-top: 1px;
}

.fields {
    flex: 1;
    min-width: 0;
    padding-left: 13px;
}

.table-row {
    display: flex;
    align-items: center;
    height: 24px;
}

.table-icon {
    margin-top: 6px;
    margin-left: 4px;
    margin-right: -1px;
}

.table-icon circle {
    fill: #117865;
    stroke: none;
}

.table-icon .tick {
    stroke: #fff;
}

.field {
    display: flex;
    align-items: center;
    height: 24px;
    padding-left: 31px;
    white-space: nowrap;
}

.expandable {
    padding-left: 15px;
}

.field svg {
    flex: none;
    width: 12px;
    height: 14px;
    margin: 0 6px 0 8px;
}

.field .chevron {
    margin: 0 4px 0 0;
}

.field input[type="checkbox"]:checked {
    border-color: #117865;
    background-color: #117865;
}

.field input[type="checkbox"]:checked::before {
    content: "";
    display: block;
    width: 8px;
    height: 4px;
    margin: 2px 1px;
    border: solid #fff;
    border-width: 0 0 1px 1px;
    transform: rotate(-45deg);
}

.tree-scroll {
    width: 8px;
    height: 300px;
    margin-top: 157px;
    margin-right: 3px;
    background-color: #8a8886;
}
```
